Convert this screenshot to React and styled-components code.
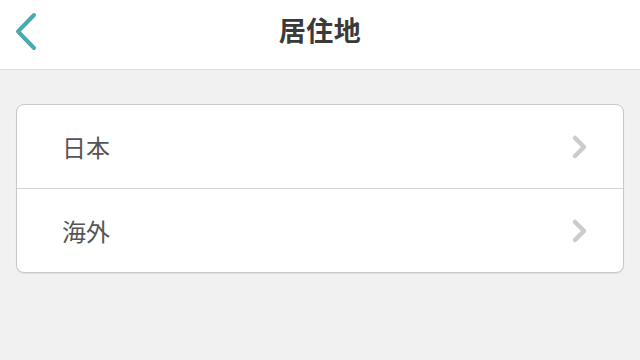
import React from 'react';
import styled, { createGlobalStyle } from 'styled-components';

const GlobalStyle = createGlobalStyle`
  html, body {
    margin: 0;
    padding: 0;
    background: #f1f1f1;
    font-family: "Noto Sans CJK JP", "Noto Sans", sans-serif;
  }
`;

const Page = styled.div`
  width: 640px;
  height: 360px;
  background: #f1f1f1;
  overflow: hidden;
`;

const Header = styled.header`
  height: 69px;
  background: #ffffff;
  border-bottom: 1px solid #dcdcdc;
  display: grid;
  grid-template-columns: 60px 1fr 60px;
  align-items: center;
`;

const BackButton = styled.button`
  border: 0;
  background: none;
  padding: 0 0 6px 14px;
  height: 100%;
  display: flex;
  align-items: center;
  cursor: pointer;
`;

const Title = styled.h1`
  margin: 0;
  padding-bottom: 11px;
  text-align: center;
  font-size: 27px;
  line-height: 1;
  font-weight: 700;
  color: #3a3a3a;
  letter-spacing: 0.5px;
`;

const Body = styled.main`
  padding: 34px 16px 0;
`;

const Card = styled.ul`
  margin: 0;
  padding: 0;
  list-style: none;
  background: #ffffff;
  border: 1px solid #c9c9c9;
  border-radius: 8px;
  box-shadow: 0 1px 1px rgba(0, 0, 0, 0.08);
  overflow: hidden;
`;

const Row = styled.li`
  height: 83px;
  display: flex;
  align-items: center;
  justify-content: space-between;
  padding: 0 34px 0 45px;
  border-top: ${p => (p.first ? 'none' : '1px solid #d6d6d6')};
`;

const Label = styled.span`
  font-size: 24px;
  line-height: 1;
  color: #555555;
`;

const Chevron = () => (
  <svg width="18" height="26" viewBox="0 0 18 26">
    <path d="M4 4 L13 13 L4 22" fill="none" stroke="#cccccc" strokeWidth="4.5" strokeLinecap="round" strokeLinejoin="round" />
  </svg>
);

const BackIcon = () => (
  <svg width="26" height="40" viewBox="0 0 26 40">
    <path d="M20 3 L4 19.5 L20 36" fill="none" stroke="#4aa8b0" strokeWidth="4" strokeLinecap="round" strokeLinejoin="round" />
  </svg>
);

const items = ['日本', '海外'];

export default function App() {
  return (
    <Page>
      <GlobalStyle />
      <Header>
        <BackButton aria-label="back">
          <BackIcon />
        </BackButton>
        <Title>居住地</Title>
        <span />
      </Header>
      <Body>
        <Card>
          {items.map((item, i) => (
            <Row key={item} first={i === 0}>
              <Label>{item}</Label>
              <Chevron />
            </Row>
          ))}
        </Card>
      </Body>
    </Page>
  );
}
